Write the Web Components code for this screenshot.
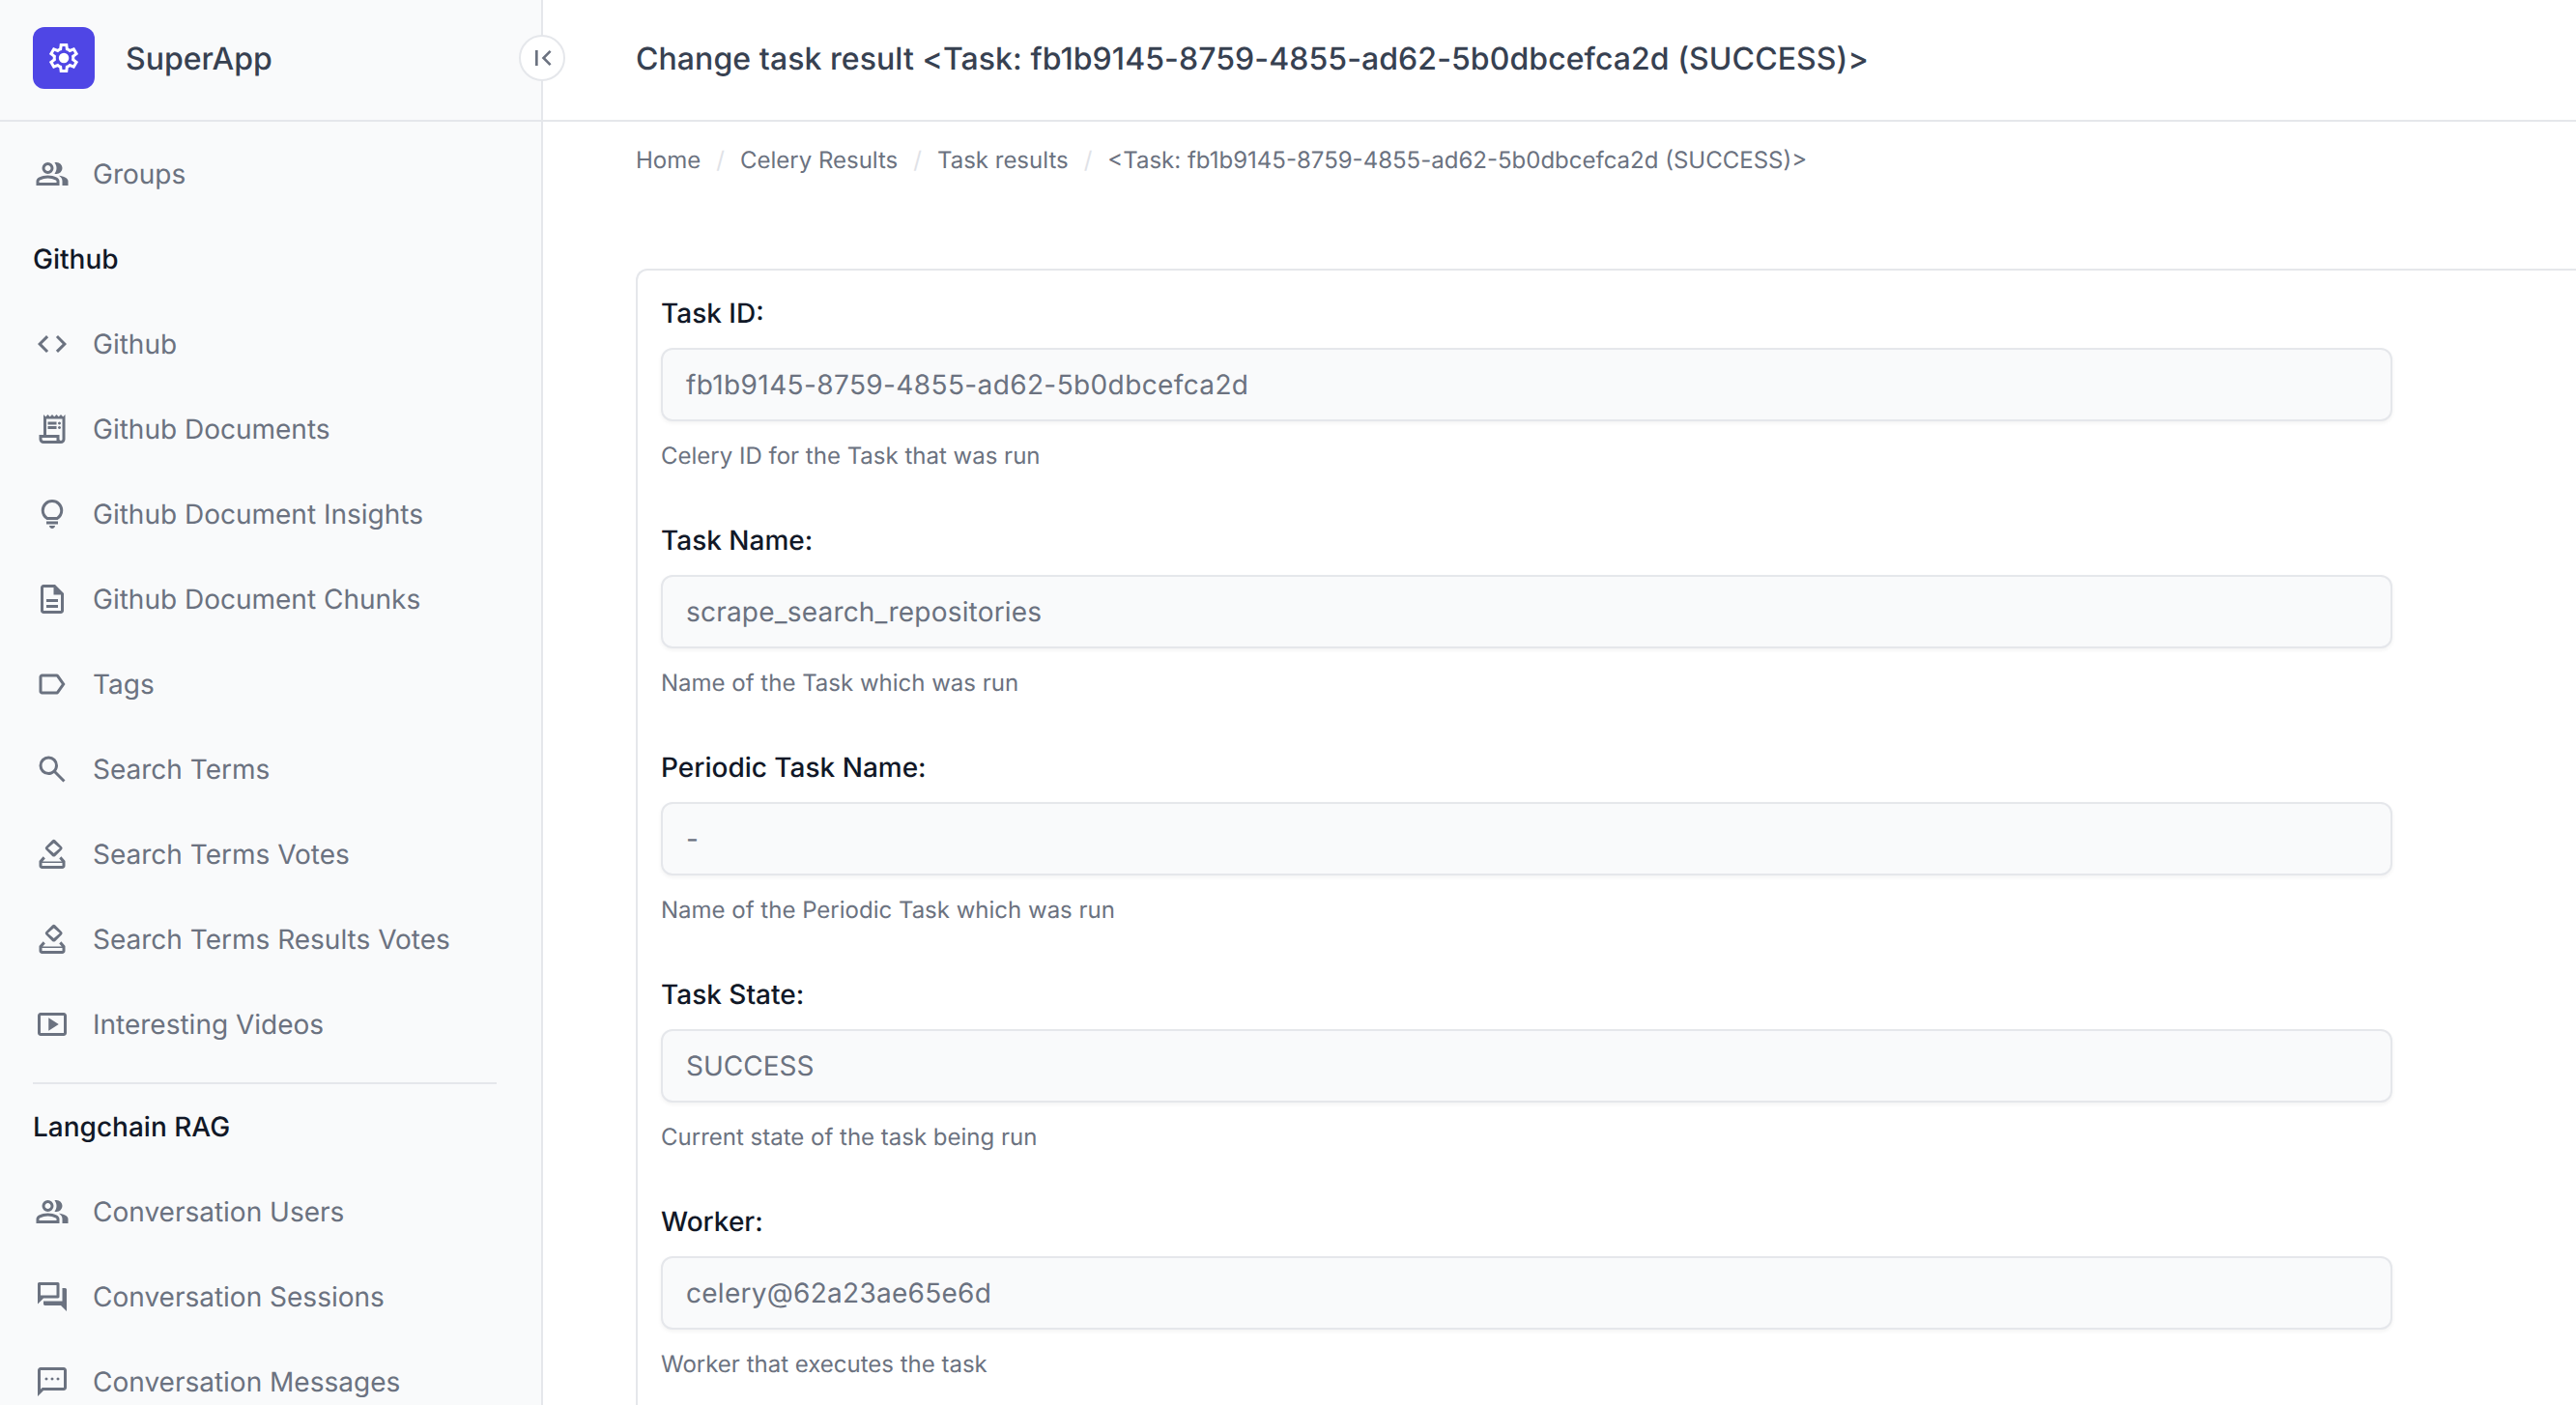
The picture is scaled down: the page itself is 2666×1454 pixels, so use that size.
<!DOCTYPE html>
<html lang="en"><head><meta charset="utf-8"><title>SuperApp</title>
<style>html,body{margin:0;height:100%;overflow:hidden;background:#fff;font-family:Inter,"Liberation Sans",sans-serif;text-rendering:geometricPrecision}</style>
</head><body>
<app-shell>
  <app-sidebar slot="sidebar">
    <nav-item icon="group">Groups</nav-item>
    <nav-section>Github</nav-section>
    <nav-item icon="code">Github</nav-item>
    <nav-item icon="receipt">Github Documents</nav-item>
    <nav-item icon="bulb">Github Document Insights</nav-item>
    <nav-item icon="doc">Github Document Chunks</nav-item>
    <nav-item icon="label">Tags</nav-item>
    <nav-item icon="search">Search Terms</nav-item>
    <nav-item icon="vote">Search Terms Votes</nav-item>
    <nav-item icon="vote">Search Terms Results Votes</nav-item>
    <nav-item icon="video">Interesting Videos</nav-item>
    <nav-section divided>Langchain RAG</nav-section>
    <nav-item icon="group">Conversation Users</nav-item>
    <nav-item icon="forum">Conversation Sessions</nav-item>
    <nav-item icon="sms">Conversation Messages</nav-item>
  </app-sidebar>
  <page-header slot="hdr">Change task result &lt;Task: fb1b9145-8759-4855-ad62-5b0dbcefca2d (SUCCESS)&gt;</page-header>
  <bread-crumbs>
    <span>Home</span><span>Celery Results</span><span>Task results</span><span>&lt;Task: fb1b9145-8759-4855-ad62-5b0dbcefca2d (SUCCESS)&gt;</span>
  </bread-crumbs>
  <form-card>
    <form-field label="Task ID:" value="fb1b9145-8759-4855-ad62-5b0dbcefca2d" track=".38px">Celery ID for the Task that was run</form-field>
    <form-field label="Task Name:" value="scrape_search_repositories" track=".2px">Name of the Task which was run</form-field>
    <form-field label="Periodic Task Name:" value="-">Name of the Periodic Task which was run</form-field>
    <form-field label="Task State:" value="SUCCESS">Current state of the task being run</form-field>
    <form-field label="Worker:" value="celery@62a23ae65e6d" track=".27px">Worker that executes the task</form-field>
  </form-card>
</app-shell>
<script>
const ICONS={
group:'M40-160v-112q0-34 17.5-62.5T104-378q62-31 126-46.5T360-440q66 0 130 15.5T616-378q29 15 46.5 43.5T680-272v112H40Zm720 0v-120q0-44-24.5-84.5T666-434q51 6 96 20.5t84 35.5q36 20 55 44.5t19 53.5v120H760ZM360-480q-66 0-113-47t-47-113q0-66 47-113t113-47q66 0 113 47t47 113q0 66-47 113t-113 47Zm400-160q0 66-47 113t-113 47q-11 0-28-2.5t-28-5.5q27-32 41.5-71t14.5-81q0-42-14.5-81T544-792q14-5 28-6.5t28-1.5q66 0 113 47t47 113ZM120-240h480v-32q0-11-5.5-20T580-306q-54-27-109-40.5T360-360q-56 0-111 13.5T140-306q-9 5-14.5 14t-5.5 20v32Zm240-320q33 0 56.5-23.5T440-640q0-33-23.5-56.5T360-720q-33 0-56.5 23.5T280-640q0 33 23.5 56.5T360-560Z',
code:'M320-240 80-480l240-240 57 57-184 184 183 183-56 56Zm320 0-57-57 184-184-183-183 56-56 240 240-240 240Z',
receipt:'M240-80q-50 0-85-35t-35-85v-120h120v-560l60 60 60-60 60 60 60-60 60 60 60-60 60 60 60-60 60 60 60-60v680q0 50-35 85t-85 35H240Zm480-80q17 0 28.5-11.5T760-200v-560H320v440h360v120q0 17 11.5 28.5T720-160ZM360-600v-80h240v80H360Zm0 120v-80h240v80H360Zm320-120q-17 0-28.5-11.5T640-640q0-17 11.5-28.5T680-680q17 0 28.5 11.5T720-640q0 17-11.5 28.5T680-600Zm0 120q-17 0-28.5-11.5T640-520q0-17 11.5-28.5T680-560q17 0 28.5 11.5T720-520q0 17-11.5 28.5T680-480ZM240-160h360v-80H200v40q0 17 11.5 28.5T240-160Z',
bulb:'M480-80q-33 0-56.5-23.5T400-160h160q0 33-23.5 56.5T480-80ZM320-200v-80h320v80H320Zm10-120q-69-41-109.5-110T180-580q0-125 87.5-212.5T480-880q125 0 212.5 87.5T780-580q0 81-40.5 150T630-320H330Zm24-80h252q45-32 69.5-79T700-580q0-92-64-156t-156-64q-92 0-156 64t-64 156q0 54 24.5 101t69.5 79Z',
doc:'M320-240h320v-80H320v80Zm0-160h320v-80H320v80ZM240-80q-33 0-56.5-23.5T160-160v-640q0-33 23.5-56.5T240-880h320l240 240v480q0 33-23.5 56.5T720-80H240Zm280-520v-200H240v640h480v-440H520Z',
label:'M840-480 666-234q-11 16-28.5 25t-37.5 9H200q-33 0-56.5-23.5T120-280v-400q0-33 23.5-56.5T200-760h400q20 0 37.5 9t28.5 25l174 246Zm-98 0L600-680H200v400h400l142-200Z',
search:'M784-120 532-372q-30 24-69 38t-83 14q-109 0-184.5-75.5T120-580q0-109 75.5-184.5T380-840q109 0 184.5 75.5T640-580q0 44-14 83t-38 69l252 252-56 56ZM380-400q75 0 127.5-52.5T560-580q0-75-52.5-127.5T380-760q-75 0-127.5 52.5T200-580q0 75 52.5 127.5T380-400Z',
vote:'M200-80q-33 0-56.5-23.5T120-160v-132l112-126 57 57-72 81h526l-70-80 57-57 110 125v132q0 33-23.5 56.5T760-80H200Zm0-80h560v-80H200v80ZM305-690 483-870Q525-900 567-870L745-690Q785-648 745-606L567-426Q525-396 483-426L305-606Q265-648 305-690ZM525-790 360-648 525-506 690-648Z',
video:'m380-300 280-180-280-180v360ZM160-160q-33 0-56.5-23.5T80-240v-480q0-33 23.5-56.5T160-800h640q33 0 56.5 23.5T880-720v480q0 33-23.5 56.5T800-160H160Zm0-80h640v-480H160v480Z',
forum:'M280-240q-17 0-28.5-11.5T240-280v-80h520v-360h80q17 0 28.5 11.5T880-680v600L720-240H280ZM80-280v-560q0-17 11.5-28.5T120-880h520q17 0 28.5 11.5T680-840v360q0 17-11.5 28.5T640-440H240L80-280Zm520-240v-280H160v280h440Z',
sms:'M320-520q17 0 28.5-11.5T360-560q0-17-11.5-28.5T320-600q-17 0-28.5 11.5T280-560q0 17 11.5 28.5T320-520Zm160 0q17 0 28.5-11.5T520-560q0-17-11.5-28.5T480-600q-17 0-28.5 11.5T440-560q0 17 11.5 28.5T480-520Zm160 0q17 0 28.5-11.5T680-560q0-17-11.5-28.5T640-600q-17 0-28.5 11.5T600-560q0 17 11.5 28.5T640-520ZM80-80v-720q0-33 23.5-56.5T160-880h640q33 0 56.5 23.5T880-800v480q0 33-23.5 56.5T800-240H240L80-80Zm126-240h594v-480H160v525l46-45Z',
gear:'m370-80-16-128q-13-5-24.5-12T307-235l-119 50L78-375l103-78q-1-7-1-13.5v-27q0-6.5 1-13.5L78-585l110-190 119 50q11-8 23-15t24-12l16-128h220l16 128q13 5 24.5 12t22.5 15l119-50 110 190-103 78q1 7 1 13.5v27q0 6.5-2 13.5l103 78-110 190-118-50q-11 8-23 15t-24 12L590-80H370Zm70-80h79l14-106q31-8 57.5-23.5T639-327l99 41 39-68-86-65q5-14 7-29.5t2-31.5q0-16-2-31.5t-7-29.5l86-65-39-68-99 42q-22-23-48.5-38.5T533-694l-13-106h-79l-14 106q-31 8-57.5 23.5T321-633l-99-41-39 68 86 64q-5 15-7 30t-2 32q0 16 2 31t7 30l-86 65 39 68 99-42q22 23 48.5 38.5T427-266l13 106Zm42-180q58 0 99-41t41-99q0-58-41-99t-99-41q-59 0-99.5 41T342-480q0 58 40.5 99t99.5 41Z',
first:'M240-240v-480h80v480h-80Zm440 0L440-480l240-240 56 56-184 184 184 184-56 56Z'};
const svg=(n,s)=>`<svg xmlns="http://www.w3.org/2000/svg" width="${s}" height="${s}" viewBox="0 -960 960 960" fill="currentColor" aria-hidden="true"><path d="${ICONS[n]}"/></svg>`;
class Base extends HTMLElement{
  connectedCallback(){ if(!this.shadowRoot){this.attachShadow({mode:'open'}).innerHTML=this.render();} }
}
customElements.define('app-shell',class extends Base{render(){return `<style>
:host{display:grid;grid-template-columns:562px minmax(0,1fr);height:1454px;overflow:hidden;position:relative}
.side{grid-row:1;grid-column:1;min-height:0;overflow:hidden}
main{grid-column:2;min-width:0;overflow:hidden;display:flex;flex-direction:column}
.body{padding:0 0 0 96px;display:flex;flex-direction:column}
.c{position:absolute;left:537px;top:36px;width:48px;height:48px;box-sizing:border-box;border:2px solid #e5e7eb;border-radius:50%;background:#fff;color:#6b7280;display:flex;align-items:center;justify-content:center}
.c svg{margin-left:1px}
</style><div class="side"><slot name="sidebar"></slot></div><main><slot name="hdr"></slot><div class="body"><slot></slot></div></main><span class="c">${svg('first',32)}</span>`}});
customElements.define('app-sidebar',class extends Base{render(){return `<style>
:host{display:flex;flex-direction:column;height:1454px;background:#f9fafb;border-right:2px solid #e5e7eb;box-sizing:border-box;width:562px;overflow:hidden}
.brand{height:120px;padding-bottom:4px;flex:none;border-bottom:2px solid #e5e7eb;display:flex;align-items:center;padding-left:34px;gap:32px;font-size:32px;font-weight:500;color:#374151}
.logo{width:64px;height:64px;border-radius:12px;background:#4f46e5;color:#fff;display:flex;align-items:center;justify-content:center}
.nav{padding:10px 0 0;display:flex;flex-direction:column}
</style><div class="brand"><span class="logo">${svg('gear',36)}</span><span>SuperApp</span></div><div class="nav"><slot></slot></div>`}});
customElements.define('nav-item',class extends Base{render(){return `<style>
:host{display:flex;align-items:center;height:88px;padding-left:36px;gap:24px;color:#6b7280;font-size:28px;flex:none}
svg{flex:none;display:block}
</style>${svg(this.getAttribute('icon'),36)}<span><slot></slot></span>`}});
customElements.define('nav-section',class extends Base{render(){return `<style>
:host{display:block;flex:none}
.d{height:2px;background:#e5e7eb;margin:16px 46px 0 34px}
.t{height:88px;display:flex;align-items:center;padding-left:34px;color:#111827;font-size:28px;font-weight:500}
</style>${this.hasAttribute('divided')?'<div class="d"></div>':''}<div class="t"><slot></slot></div>`}});
customElements.define('page-header',class extends Base{render(){return `<style>
:host{display:flex;align-items:center;height:120px;padding-bottom:4px;flex:none;border-bottom:2px solid #e5e7eb;padding-left:96px;font-size:32px;font-weight:500;letter-spacing:.07px;color:#374151;white-space:nowrap}
</style><span><slot></slot></span>`}});
customElements.define('bread-crumbs',class extends Base{
 connectedCallback(){ if(this.shadowRoot) return; super.connectedCallback();
  [...this.children].forEach((c,i)=>{ if(i){ const s=document.createElement('i'); s.textContent='/'; s.setAttribute('style','font-style:normal;color:#e0e2e7;margin:0 16px'); this.insertBefore(s,c);} });
 }
 render(){return `<style>
:host{display:flex;align-items:center;height:46px;margin-top:16px;font-size:24px;color:#6b7280;white-space:nowrap}
</style><slot></slot>`}});
customElements.define('form-card',class extends Base{render(){return `<style>
:host{display:block;box-sizing:border-box;width:2400px;margin-top:90px;border:2px solid #e5e7eb;border-right:0;border-bottom:0;border-top-left-radius:12px;padding:24px 0 0 24px;flex:none}
</style><slot></slot>`}});
customElements.define('form-field',class extends Base{render(){return `<style>
:host{display:block;width:1792px;height:235px}
.l{display:block;font-size:28px;font-weight:500;color:#111827;line-height:40px;height:40px}
.v{margin-top:16px;box-sizing:border-box;height:76px;border:2px solid #e5e7eb;border-radius:12px;background:#f9fafb;box-shadow:0 2px 4px rgba(0,0,0,.05);display:flex;align-items:center;padding-left:24px;font-size:28px;color:#6b7280;letter-spacing:${this.getAttribute('track')||'0'}}
.h{margin-top:20px;font-size:24px;line-height:32px;color:#6b7280}
</style><span class="l">${this.getAttribute('label')}</span><div class="v">${this.getAttribute('value')}</div><div class="h"><slot></slot></div>`}});
</script>
</body></html>
